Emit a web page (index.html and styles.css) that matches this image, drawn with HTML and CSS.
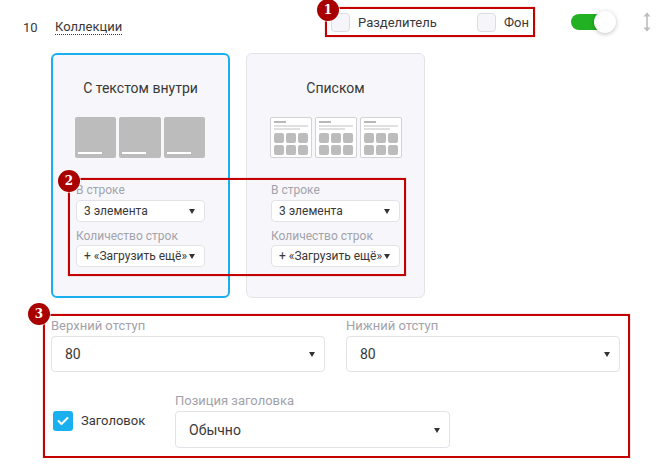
FILE: index.html
```html
<!DOCTYPE html>
<html lang="ru">
<head>
  <meta charset="UTF-8" />
  <meta name="viewport" content="width=device-width, initial-scale=1.0" />
  <title>Коллекции</title>
  <link rel="stylesheet" href="styles.css">
</head>
<body>
  <div class="block">
    <div class="head">
      <span class="num">10</span>
      <span class="title">Коллекции</span>

      <div class="opts mark">
        <span class="badge">1</span>
        <label class="opt"><span class="box"></span>Разделитель</label>
        <label class="opt"><span class="box"></span>Фон</label>
      </div>

      <div class="toggle"><span class="knob"></span></div>

      <svg class="drag" width="10" height="22" viewBox="0 0 10 22">
        <path d="M5 2 L5 20" stroke="#bdbdbd" stroke-width="1.6" />
        <path d="M1.5 5.5 L5 1.5 L8.5 5.5 Z" fill="#bdbdbd" />
        <path d="M1.5 16.5 L5 20.5 L8.5 16.5 Z" fill="#bdbdbd" />
      </svg>
    </div>

    <div class="cards">
      <div class="card active">
        <div class="card-title">С текстом внутри</div>
        <div class="thumbs">
          <div class="tile"><span></span></div>
          <div class="tile"><span></span></div>
          <div class="tile"><span></span></div>
        </div>
        <div class="field">
          <div class="label">В строке</div>
          <div class="select small">3 элемента<i class="arrow"></i></div>
        </div>
        <div class="field">
          <div class="label">Количество строк</div>
          <div class="select small">+ «Загрузить ещё»<i class="arrow"></i></div>
        </div>
      </div>

      <div class="card">
        <div class="card-title">Списком</div>
        <div class="thumbs">
          <div class="list">
            <b class="l1"></b><b class="l2"></b><b class="l3"></b>
            <div class="dots"><i></i><i></i><i></i><i></i><i></i><i></i></div>
          </div>
          <div class="list">
            <b class="l1"></b><b class="l2"></b><b class="l3"></b>
            <div class="dots"><i></i><i></i><i></i><i></i><i></i><i></i></div>
          </div>
          <div class="list">
            <b class="l1"></b><b class="l2"></b><b class="l3"></b>
            <div class="dots"><i></i><i></i><i></i><i></i><i></i><i></i></div>
          </div>
        </div>
        <div class="field">
          <div class="label">В строке</div>
          <div class="select small">3 элемента<i class="arrow"></i></div>
        </div>
        <div class="field">
          <div class="label">Количество строк</div>
          <div class="select small">+ «Загрузить ещё»<i class="arrow"></i></div>
        </div>
      </div>

      <div class="mark mark-rows"><span class="badge">2</span></div>
    </div>

    <div class="settings mark">
      <span class="badge">3</span>
      <div class="pad-row">
        <div class="field">
          <div class="label big">Верхний отступ</div>
          <div class="select">80<i class="arrow"></i></div>
        </div>
        <div class="field">
          <div class="label big">Нижний отступ</div>
          <div class="select">80<i class="arrow"></i></div>
        </div>
      </div>
      <div class="heading-row">
        <label class="check">
          <span class="box on">
            <svg width="12" height="10" viewBox="0 0 12 10"><path d="M1.5 5 L4.5 8 L10.5 2" fill="none" stroke="#fff" stroke-width="2" stroke-linecap="round" stroke-linejoin="round" /></svg>
          </span>
          Заголовок
        </label>
        <div class="field pos">
          <div class="label big">Позиция заголовка</div>
          <div class="select">Обычно<i class="arrow"></i></div>
        </div>
      </div>
    </div>
  </div>
</body>
</html>
```

FILE: styles.css
```css
* {
  box-sizing: border-box;
}

body {
  margin: 0;
  font-family: Roboto, "Noto Sans", sans-serif;
  color: #383838;
  background: #fff;
  width: 667px;
}

.block {
  padding-top: 7px;
}

/* annotation frames */
.mark {
  position: relative;
  border: 2px solid #c40000;
  box-shadow: 0 0 1px rgba(120, 0, 0, 0.5);
}

.badge {
  position: absolute;
  width: 22px;
  height: 22px;
  border-radius: 50%;
  background: #a80000;
  color: #fff;
  font-family: "DejaVu Serif", serif;
  font-weight: bold;
  font-size: 12px;
  line-height: 22px;
  text-align: center;
  box-shadow: 0 0 0 1px rgba(255, 255, 255, 0.6);
}

/* header */
.head {
  display: flex;
  align-items: center;
  height: 30px;
  padding-left: 23px;
}

.num {
  width: 32px;
  font-size: 13px;
  margin-top: 10px;
}

.title {
  font-size: 13px;
  line-height: 15px;
  margin-top: 10px;
  border-bottom: 1px dotted #333;
}

.opts {
  margin-left: auto;
  width: 210px;
  height: 30px;
  display: flex;
  align-items: center;
  justify-content: space-between;
  padding: 0 4px 0 4px;
}

.opts .badge {
  left: -10px;
  top: -10px;
}

.opt {
  display: flex;
  align-items: center;
  gap: 8px;
  font-size: 13px;
}

.box {
  width: 19px;
  height: 19px;
  border: 1px solid #dcdce2;
  border-radius: 4px;
  background: #f6f6fa;
}

.toggle {
  position: relative;
  width: 43px;
  height: 16px;
  margin-left: 36px;
  border-radius: 8px;
  background: #22b122;
  margin-right: 3px;
}

.knob {
  position: absolute;
  right: -2px;
  top: -3px;
  width: 22px;
  height: 22px;
  border-radius: 50%;
  background: #fff;
  box-shadow: 0 1px 4px rgba(0, 0, 0, 0.25);
}

.drag {
  margin-left: 25px;
  margin-right: 15px;
}

/* cards */
.cards {
  position: relative;
  display: flex;
  gap: 16px;
  padding-left: 51px;
  margin-top: 16px;
}

.card {
  width: 179px;
  height: 245px;
  border: 1px solid #e3e3ea;
  border-radius: 6px;
  background: #f7f7fb;
  padding: 24px 24px 0;
}

.card.active {
  border: 2px solid #1ab0f0;
  padding: 23px 23px 0;
}

.card-title {
  font-size: 14px;
  line-height: 20px;
  text-align: center;
}

.thumbs {
  display: flex;
  gap: 3px;
  margin: 19px 0 24px -1px;
}

.tile {
  position: relative;
  width: 42px;
  height: 41px;
  border-radius: 2px;
  background: #bcbcbc;
}

.tile span {
  position: absolute;
  left: 3px;
  bottom: 4px;
  width: 24px;
  height: 2px;
  background: #fff;
}

.list {
  width: 42px;
  height: 41px;
  border: 1px solid #d2d2d6;
  border-radius: 2px;
  background: #fff;
  padding: 3px 3px 0;
}

.list b {
  display: block;
  height: 2px;
  margin-bottom: 1px;
}

.list .l1 {
  width: 12px;
  background: #b8b8b8;
  margin-bottom: 2px;
}

.list .l2 {
  width: 34px;
  background: #e0e0e0;
}

.list .l3 {
  width: 26px;
  background: #e0e0e0;
}

.dots {
  display: grid;
  grid-template-columns: repeat(3, 10px);
  gap: 2px;
  margin-top: 3px;
}

.dots i {
  height: 10px;
  border-radius: 2px;
  background: #bcbcbc;
}

.mark-rows {
  position: absolute;
  left: 68px;
  top: 125px;
  width: 338px;
  height: 98px;
}

.mark-rows .badge {
  left: -12px;
  top: -10px;
}

/* fields */
.label {
  font-size: 12px;
  line-height: 16px;
  color: #a2a2aa;
}

.label.big {
  font-size: 13px;
}

.select {
  position: relative;
  display: flex;
  align-items: center;
  height: 36px;
  padding-left: 13px;
  border: 1px solid #e2e2e8;
  border-radius: 4px;
  background: #fff;
  font-size: 14px;
  margin-top: 2px;
}

.select.small {
  height: 22px;
  padding-left: 7px;
  font-size: 12px;
  margin-top: 2px;
}

.card .field + .field .label {
  margin-top: 6px;
}

.card .field + .field .select {
  margin-top: 1px;
}

.arrow {
  position: absolute;
  right: 9px;
  top: 50%;
  margin-top: -2px;
  border-left: 3px solid transparent;
  border-right: 3px solid transparent;
  border-top: 5px solid #333;
}

/* settings */
.settings {
  width: 587px;
  margin: 16px 0 0 43px;
  padding: 2px 8px 8px 6px;
}

.settings .badge {
  left: -17px;
  top: -13px;
}

.pad-row {
  display: grid;
  grid-template-columns: 274px 274px;
  gap: 21px;
}

.heading-row {
  display: flex;
  align-items: center;
  margin-top: 21px;
}

.check {
  display: flex;
  align-items: center;
  gap: 8px;
  width: 124px;
  padding-left: 2px;
  font-size: 13px;
}

.box.on {
  width: 20px;
  height: 20px;
  border: none;
  border-radius: 3px;
  background: #1ab0f0;
  display: flex;
  align-items: center;
  justify-content: center;
}

.pos {
  width: 275px;
}

.pos .select {
  height: 37px;
}
```
